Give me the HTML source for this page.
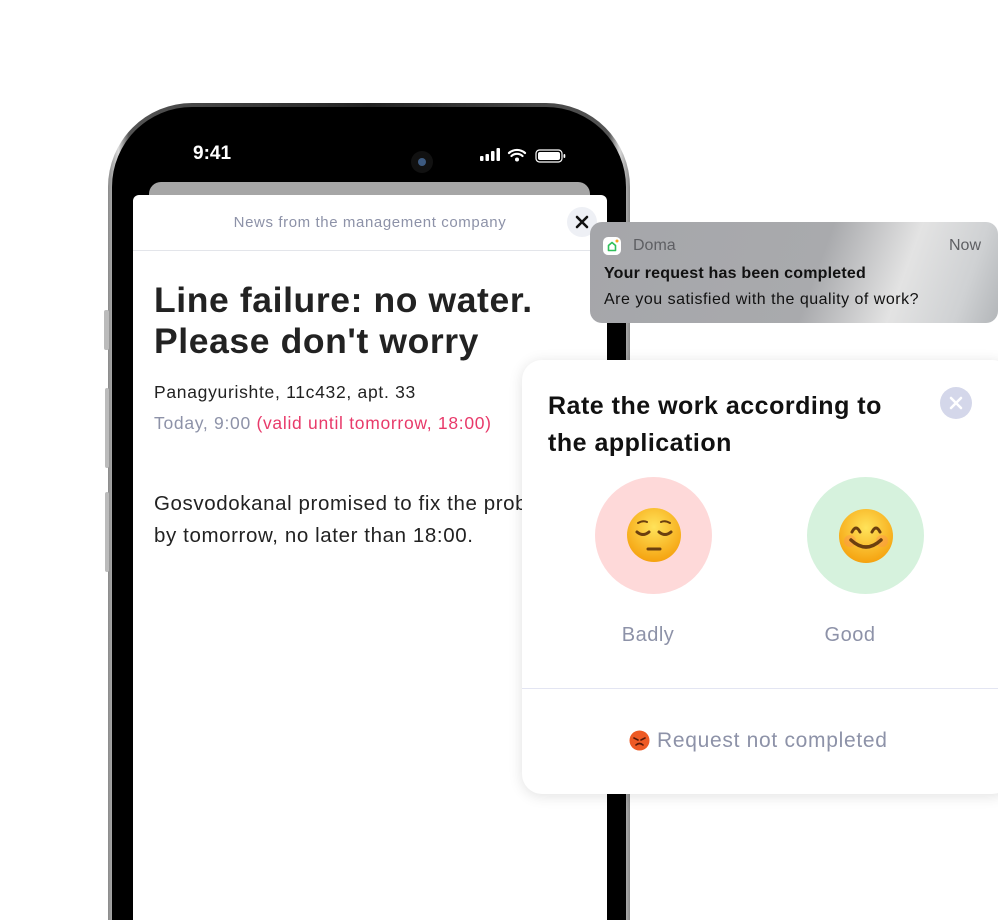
<!DOCTYPE html>
<html><head><meta charset="utf-8"><style>
*{margin:0;padding:0;box-sizing:border-box}
html,body{width:998px;height:920px;overflow:hidden}
body{background:#fff;position:relative;font-family:"Liberation Sans",sans-serif}
.abs{position:absolute}
</style></head><body>
<div class="abs" style="left:108px;top:103px;width:522px;height:817px;border-radius:84px 84px 0 0;background:linear-gradient(90deg,#8a8a8a,#d8d8d8 2%,#555 4%,#222 50%,#555 96%,#d8d8d8 98%,#8a8a8a);"></div>
<div class="abs" style="left:112px;top:107px;width:514px;height:813px;border-radius:80px 80px 0 0;background:#000"></div>
<div class="abs" style="left:104px;top:310px;width:5px;height:40px;background:#bbb;border-radius:2px"></div>
<div class="abs" style="left:105px;top:388px;width:4px;height:80px;background:#bbb;border-radius:2px"></div>
<div class="abs" style="left:105px;top:492px;width:4px;height:80px;background:#bbb;border-radius:2px"></div>
<div class="abs" style="left:193px;top:143px;color:#fff;font-size:19px;font-weight:bold">9:41</div>
<div class="abs" style="left:411px;top:151px;width:22px;height:22px;border-radius:50%;background:#111"><div style="margin:7px;width:8px;height:8px;border-radius:50%;background:#3d5a80"></div></div>
<svg class="abs" style="left:480px;top:146px" width="90" height="18" viewBox="0 0 90 18">
<rect x="0" y="10" width="3.5" height="5" rx="1" fill="#fff"/><rect x="5.5" y="8" width="3.5" height="7" rx="1" fill="#fff"/><rect x="11" y="5" width="3.5" height="10" rx="1" fill="#fff"/><rect x="16.5" y="2" width="3.5" height="13" rx="1" fill="#fff"/>
<path d="M29 7a12 12 0 0 1 16 0M31.5 10a8 8 0 0 1 11 0" stroke="#fff" stroke-width="2.2" fill="none" stroke-linecap="round"/><circle cx="37" cy="13.5" r="2" fill="#fff"/>
<rect x="56" y="4" width="26" height="12" rx="3.5" fill="none" stroke="#fff" stroke-width="1.2"/><rect x="58" y="6" width="22" height="8" rx="2" fill="#fff"/><rect x="83.5" y="8" width="1.8" height="4" rx="1" fill="#fff"/>
</svg>
<div class="abs" style="left:149px;top:182px;width:441px;height:40px;border-radius:12px;background:#a6a6a6"></div>
<div class="abs" style="left:133px;top:195px;width:474px;height:725px;background:#fff;border-radius:6px 6px 0 0"></div>
<div class="abs" style="left:133px;top:214px;width:474px;text-align:center;color:#8d92a8;font-size:15px;letter-spacing:0.6px">News from the management company</div>
<div class="abs" style="left:567px;top:207px;width:30px;height:30px;border-radius:50%;background:#eef0f5"></div>
<svg class="abs" style="left:575px;top:215px" width="14" height="14"><path d="M2 2L12 12M12 2L2 12" stroke="#111" stroke-width="2.6" stroke-linecap="round"/></svg>
<div class="abs" style="left:133px;top:250px;width:474px;height:1px;background:#e3e5ea"></div>
<div class="abs" style="left:154px;top:280px;font-size:35.5px;font-weight:bold;color:#222;line-height:41px;letter-spacing:0.6px">Line failure: no water.<br>Please don't worry</div>
<div class="abs" style="left:154px;top:382px;font-size:17.5px;color:#222;letter-spacing:0.7px">Panagyurishte, 11c432, apt. 33</div>
<div class="abs" style="left:154px;top:413px;font-size:17.5px;color:#8d92a8;letter-spacing:0.7px">Today, 9:00 <span style="color:#e83a6a">(valid until tomorrow, 18:00)</span></div>
<div class="abs" style="left:154px;top:488px;font-size:20.5px;color:#222;line-height:32px;white-space:nowrap;width:370px;overflow:hidden;letter-spacing:0.6px">Gosvodokanal promised to fix the problem<br>by tomorrow, no later than 18:00.</div>
<div class="abs" style="left:590px;top:222px;width:408px;height:101px;border-radius:12px;background:linear-gradient(110deg,#a5a6aa 0%,#a9aaad 55%,#e3e3e3 75%,#cfd1d3 90%,#b3b6b9 100%)"></div>
<div class="abs" style="left:603px;top:237px;width:18px;height:18px;border-radius:5px;background:#fff"></div>
<svg class="abs" style="left:603px;top:237px" width="18" height="18"><path d="M5.5 13.5V8.5L9 5.5L12.5 8.5V13.5Z" fill="none" stroke="#2fbf5a" stroke-width="1.6" stroke-linejoin="round"/><circle cx="14" cy="4" r="1.5" fill="#f5a623"/></svg>
<div class="abs" style="left:633px;top:237px;font-size:16px;color:#5e5f63">Doma</div>
<div class="abs" style="left:949px;top:237px;font-size:16px;color:#5e5f63">Now</div>
<div class="abs" style="left:604px;top:265px;font-size:16px;font-weight:bold;color:#111;letter-spacing:0.2px">Your request has been completed</div>
<div class="abs" style="left:604px;top:291px;font-size:16px;color:#111;letter-spacing:0.5px">Are you satisfied with the quality of work?</div>
<div class="abs" style="left:522px;top:360px;width:490px;height:434px;border-radius:20px;background:#fff;box-shadow:0 2px 14px rgba(0,0,0,0.12)"></div>
<div class="abs" style="left:548px;top:388px;font-size:25px;font-weight:bold;color:#111;line-height:37px;letter-spacing:0.5px">Rate the work according to<br>the application</div>
<div class="abs" style="left:940px;top:387px;width:32px;height:32px;border-radius:50%;background:#d4d7ea"></div>
<svg class="abs" style="left:949px;top:396px" width="14" height="14"><path d="M2 2L12 12M12 2L2 12" stroke="#fff" stroke-width="2.6" stroke-linecap="round"/></svg>
<div class="abs" style="left:595px;top:477px;width:117px;height:117px;border-radius:50%;background:#fed9d9"></div>
<div class="abs" style="left:807px;top:477px;width:117px;height:117px;border-radius:50%;background:#d6f2dd"></div>
<svg class="abs" style="left:625px;top:506px" width="58" height="58" viewBox="0 0 58 58">
<defs><radialGradient id="g" cx="50%" cy="35%" r="65%"><stop offset="0" stop-color="#ffe35a"/><stop offset="1" stop-color="#f5a20f"/></radialGradient></defs>
<circle cx="29" cy="29" r="27" fill="url(#g)"/>
<path d="M12 26q6 5 12 0M34 26q6 5 12 0" stroke="#6b3f0f" stroke-width="3" fill="none" stroke-linecap="round"/>
<path d="M13 17q5-3 9-1M45 17q-5-3-9-1" stroke="#6b3f0f" stroke-width="2" fill="none" stroke-linecap="round"/>
<path d="M23 43h12" stroke="#6b3f0f" stroke-width="3" stroke-linecap="round"/>
</svg>
<svg class="abs" style="left:837px;top:507px" width="58" height="58" viewBox="0 0 58 58">
<circle cx="29" cy="29" r="27" fill="url(#g)"/>
<circle cx="13" cy="34" r="6" fill="#ff8a5a" opacity=".35"/><circle cx="45" cy="34" r="6" fill="#ff8a5a" opacity=".35"/>
<path d="M15 25q4-8 8 0M35 25q4-8 8 0" stroke="#6b3f0f" stroke-width="3" fill="none" stroke-linecap="round"/>
<path d="M14 33q15 14 30 0" stroke="#6b3f0f" stroke-width="3.5" fill="none" stroke-linecap="round"/>
</svg>
<div class="abs" style="left:600px;top:624px;width:96px;text-align:center;font-size:20px;color:#8d92a8;letter-spacing:0.5px">Badly</div>
<div class="abs" style="left:802px;top:624px;width:96px;text-align:center;font-size:20px;color:#8d92a8;letter-spacing:0.5px">Good</div>
<div class="abs" style="left:522px;top:688px;width:476px;height:1px;background:#e3e5f2"></div>
<svg class="abs" style="left:629px;top:730px" width="21" height="21" viewBox="0 0 21 21"><circle cx="10.5" cy="10.5" r="10" fill="#ee5a24"/><path d="M5 8l4 2M16 8l-4 2M7 15q3.5-3 7 0" stroke="#5a1a0a" stroke-width="1.6" fill="none" stroke-linecap="round"/></svg>
<div class="abs" style="left:657px;top:729px;font-size:21px;color:#8d92a8;letter-spacing:0.7px">Request not completed</div>
</body></html>
